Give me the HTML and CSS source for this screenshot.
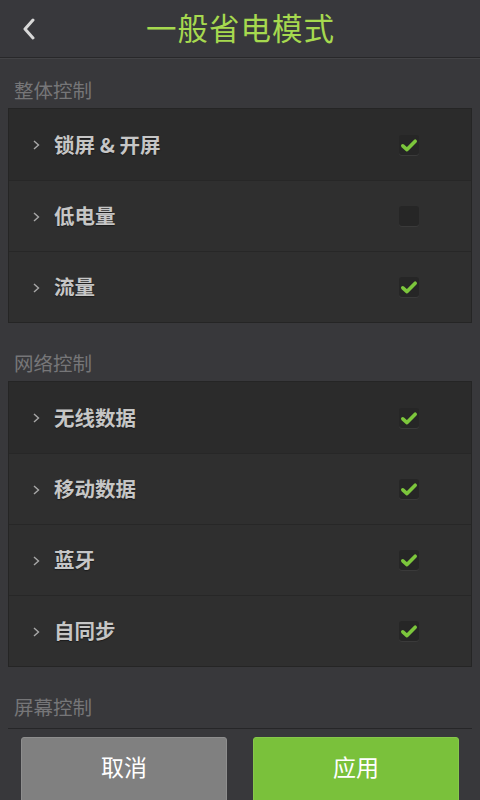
FILE: index.html
```html
<!DOCTYPE html>
<html lang="zh-CN">
<head>
<meta charset="utf-8">
<title>一般省电模式</title>
<link rel="stylesheet" href="styles.css">
</head>
<body>
<div class="app">
  <header class="topbar">
    <button class="back" aria-label="返回">
      <svg width="16" height="22" viewBox="0 0 16 22"><polyline points="12,2 4,11 12,20" fill="none" stroke="#d8d8d8" stroke-width="3" stroke-linecap="round" stroke-linejoin="round"/></svg>
    </button>
    <h1 class="title">一般省电模式</h1>
  </header>
  <main class="content">
    <div class="section-label">整体控制</div>
    <div class="card">
      <div class="row first"><span class="chev"><svg width="7" height="10" viewBox="0 0 7 10"><polyline points="1,1 5.5,5 1,9" fill="none" stroke="#a8a8a8" stroke-width="1.4"/></svg></span><span class="label">锁屏 &amp; 开屏</span><span class="box on"><svg width="20" height="20" viewBox="0 0 20 20"><polyline points="3.8,10.8 8,14.6 16.2,6.2" fill="none" stroke="#7cc63c" stroke-width="3.6" stroke-linecap="round" stroke-linejoin="round"/></svg></span></div>
      <div class="row"><span class="chev"><svg width="7" height="10" viewBox="0 0 7 10"><polyline points="1,1 5.5,5 1,9" fill="none" stroke="#a8a8a8" stroke-width="1.4"/></svg></span><span class="label">低电量</span><span class="box"></span></div>
      <div class="row"><span class="chev"><svg width="7" height="10" viewBox="0 0 7 10"><polyline points="1,1 5.5,5 1,9" fill="none" stroke="#a8a8a8" stroke-width="1.4"/></svg></span><span class="label">流量</span><span class="box on"><svg width="20" height="20" viewBox="0 0 20 20"><polyline points="3.8,10.8 8,14.6 16.2,6.2" fill="none" stroke="#7cc63c" stroke-width="3.6" stroke-linecap="round" stroke-linejoin="round"/></svg></span></div>
    </div>
    <div class="section-label">网络控制</div>
    <div class="card">
      <div class="row first"><span class="chev"><svg width="7" height="10" viewBox="0 0 7 10"><polyline points="1,1 5.5,5 1,9" fill="none" stroke="#a8a8a8" stroke-width="1.4"/></svg></span><span class="label">无线数据</span><span class="box on"><svg width="20" height="20" viewBox="0 0 20 20"><polyline points="3.8,10.8 8,14.6 16.2,6.2" fill="none" stroke="#7cc63c" stroke-width="3.6" stroke-linecap="round" stroke-linejoin="round"/></svg></span></div>
      <div class="row"><span class="chev"><svg width="7" height="10" viewBox="0 0 7 10"><polyline points="1,1 5.5,5 1,9" fill="none" stroke="#a8a8a8" stroke-width="1.4"/></svg></span><span class="label">移动数据</span><span class="box on"><svg width="20" height="20" viewBox="0 0 20 20"><polyline points="3.8,10.8 8,14.6 16.2,6.2" fill="none" stroke="#7cc63c" stroke-width="3.6" stroke-linecap="round" stroke-linejoin="round"/></svg></span></div>
      <div class="row"><span class="chev"><svg width="7" height="10" viewBox="0 0 7 10"><polyline points="1,1 5.5,5 1,9" fill="none" stroke="#a8a8a8" stroke-width="1.4"/></svg></span><span class="label">蓝牙</span><span class="box on"><svg width="20" height="20" viewBox="0 0 20 20"><polyline points="3.8,10.8 8,14.6 16.2,6.2" fill="none" stroke="#7cc63c" stroke-width="3.6" stroke-linecap="round" stroke-linejoin="round"/></svg></span></div>
      <div class="row"><span class="chev"><svg width="7" height="10" viewBox="0 0 7 10"><polyline points="1,1 5.5,5 1,9" fill="none" stroke="#a8a8a8" stroke-width="1.4"/></svg></span><span class="label">自同步</span><span class="box on"><svg width="20" height="20" viewBox="0 0 20 20"><polyline points="3.8,10.8 8,14.6 16.2,6.2" fill="none" stroke="#7cc63c" stroke-width="3.6" stroke-linecap="round" stroke-linejoin="round"/></svg></span></div>
    </div>
    <div class="section-label">屏幕控制</div>
  </main>
  <footer class="footer">
    <button class="btn cancel">取消</button>
    <button class="btn apply">应用</button>
  </footer>
</div>
</body>
</html>
```
FILE: styles.css
```css
* { box-sizing: border-box; }
html, body { margin: 0; padding: 0; }
body {
  background: #38383b;
  font-family: "Noto Sans CJK SC", "Noto Sans", sans-serif;
  width: 480px;
  height: 800px;
  overflow: hidden;
}
.app {
  display: flex;
  flex-direction: column;
  height: 800px;
}
.topbar {
  height: 58px;
  flex: none;
  display: flex;
  align-items: center;
  justify-content: center;
  position: relative;
  background: #38383c;
  border-bottom: 1px solid #28282a;
  box-shadow: 0 1px 0 #434346;
}
.back {
  position: absolute;
  left: 19px;
  top: 17px;
  padding: 0;
  border: 0;
  background: none;
  width: 20px;
  height: 24px;
  display: flex;
  align-items: center;
  justify-content: center;
}
.title {
  margin: 0 0 4px 0;
  font-size: 30.5px;
  font-weight: 400;
  color: #a6d94f;
  letter-spacing: 1px;
  line-height: 54px;
  padding-left: 1px;
}
.content {
  flex: 1;
  overflow: hidden;
  padding: 0 8px;
}
.section-label {
  padding: 17px 6px 3px;
  line-height: 30px;
  font-size: 19.5px;
  color: #767678;
}
.card {
  border: 1px solid #252525;
  background: #2f2f2f;
  margin-bottom: 8px;
}
.row {
  height: 71px;
  display: flex;
  align-items: center;
  padding: 0 52px 0 24px;
  border-top: 1px solid #272727;
  background: #2f2f2f;
}
.row.first {
  height: 71px;
  border-top: 0;
  background: #2b2b2b;
}
.chev {
  width: 7px;
  height: 10px;
  display: flex;
  margin-right: 14px;
  margin-top: 1px;
}
.label {
  flex: 1;
  font-size: 20.5px;
  font-weight: 700;
  color: #c6c6c6;
  text-shadow: 0 1px 1px #1c1c1c;
  margin-top: -2px;
}
.box {
  width: 20px;
  height: 20px;
  border-radius: 3px;
  background: #262626;
  box-shadow: 0 1px 0 #3a3a3a;
  display: flex;
}
.footer {
  flex: none;
  height: 72px;
  margin: 0 8px;
  border-top: 1px solid #262628;
  padding: 8px 13px 0;
  display: flex;
  gap: 26px;
  overflow: hidden;
}
.btn {
  flex: 1;
  height: 72px;
  border-radius: 3px 3px 0 0;
  font-family: "Noto Sans CJK SC", sans-serif;
  font-size: 23px;
  color: #ffffff;
  padding: 0 0 10px;
  line-height: 56px;
  display: flex;
  justify-content: center;
  align-items: flex-start;
}
.cancel {
  background: #808080;
  border: 1px solid #8e8e8e;
}
.apply {
  background: #7ac13b;
  border: 1px solid #86c84a;
}
```
